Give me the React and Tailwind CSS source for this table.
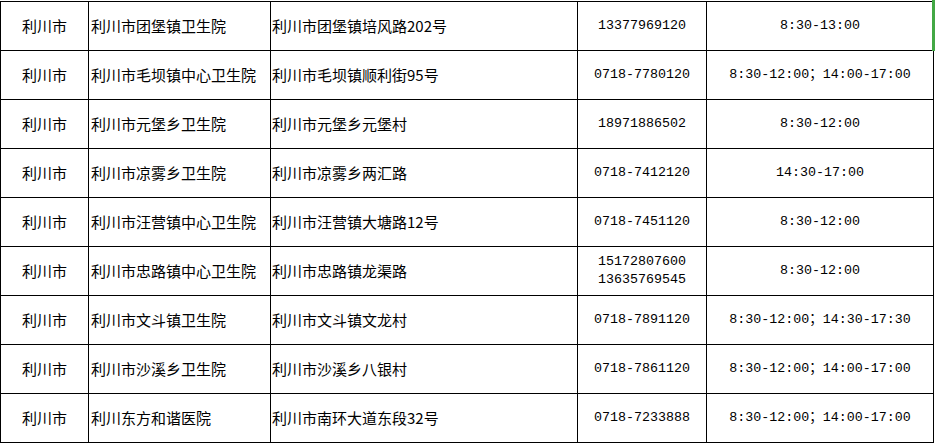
const rows = [
  ["利川市", "利川市团堡镇卫生院", "利川市团堡镇培风路202号", ["13377969120"], "8:30-13:00"],
  ["利川市", "利川市毛坝镇中心卫生院", "利川市毛坝镇顺利街95号", ["0718-7780120"], "8:30-12:00；14:00-17:00"],
  ["利川市", "利川市元堡乡卫生院", "利川市元堡乡元堡村", ["18971886502"], "8:30-12:00"],
  ["利川市", "利川市凉雾乡卫生院", "利川市凉雾乡两汇路", ["0718-7412120"], "14:30-17:00"],
  ["利川市", "利川市汪营镇中心卫生院", "利川市汪营镇大塘路12号", ["0718-7451120"], "8:30-12:00"],
  ["利川市", "利川市忠路镇中心卫生院", "利川市忠路镇龙渠路", ["15172807600", "13635769545"], "8:30-12:00"],
  ["利川市", "利川市文斗镇卫生院", "利川市文斗镇文龙村", ["0718-7891120"], "8:30-12:00；14:30-17:30"],
  ["利川市", "利川市沙溪乡卫生院", "利川市沙溪乡八银村", ["0718-7861120"], "8:30-12:00；14:00-17:00"],
  ["利川市", "利川东方和谐医院", "利川市南环大道东段32号", ["0718-7233888"], "8:30-12:00；14:00-17:00"],
];

const cjk = "font-['Noto_Sans_CJK_SC',sans-serif] text-[15px] text-black";
const mono = "font-['Liberation_Mono','Noto_Sans_CJK_SC',monospace] text-[13.33px] text-black";
const cell = "h-[49px] border-r border-b border-black flex items-center";

export default function App() {
  return (
    <div className="w-[935px] h-[444px] overflow-hidden bg-white relative">
      <div className="mt-px w-[934px] border-l border-t border-black grid grid-cols-[88px_182px_307px_129px_227px]">
        {rows.map((r, i) => (
          <div key={i} className="contents">
            <div className={`${cell} ${cjk} justify-center`}>{r[0]}</div>
            <div className={`${cell} ${cjk} pl-[2px]`}>{r[1]}</div>
            <div className={`${cell} ${cjk} pl-[1px]`}>{r[2]}</div>
            <div className={`${cell} ${mono} flex-col justify-center leading-[18px]`}>
              {r[3].map((p) => (
                <span key={p}>{p}</span>
              ))}
            </div>
            <div className={`${cell} ${mono} justify-center`}>{r[4]}</div>
          </div>
        ))}
      </div>
      <div className="absolute left-[932px] top-0 w-[3px] h-[51px] bg-[#43a845]" />
    </div>
  );
}
